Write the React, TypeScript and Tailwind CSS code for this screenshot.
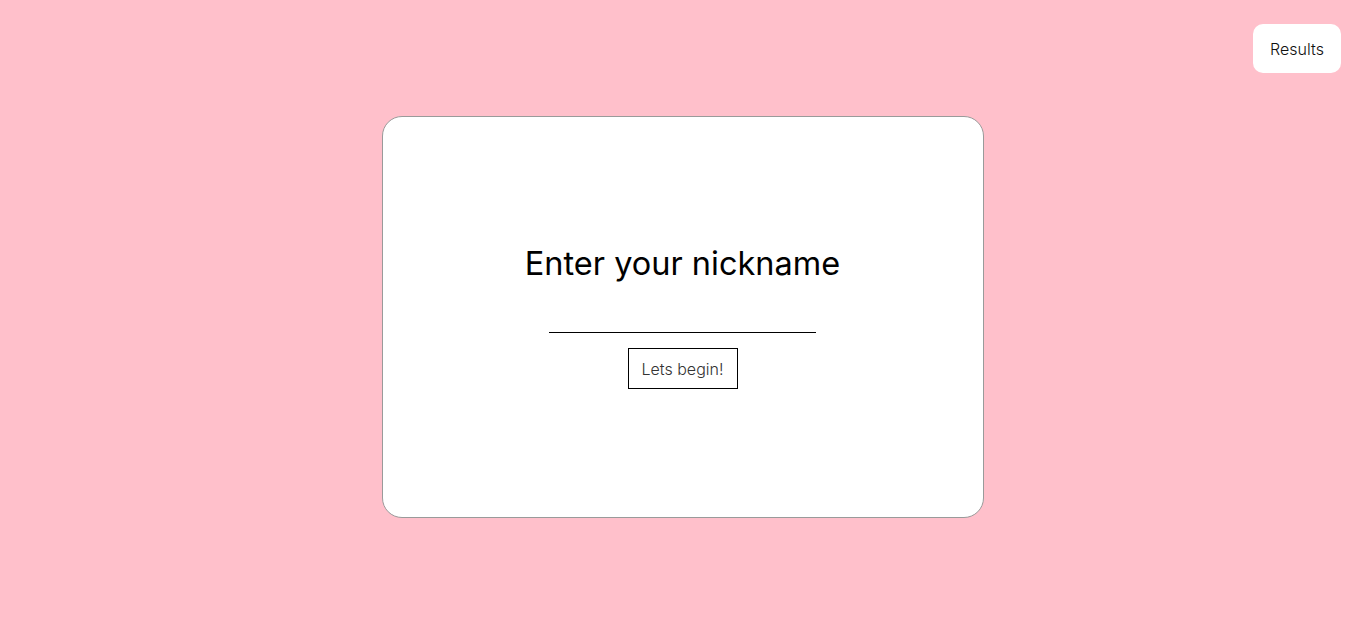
import { useState } from 'react';

export default function App() {
  const [nickname, setNickname] = useState('');

  return (
    <div className="relative flex h-[635px] w-full items-center justify-center bg-[#ffc0cb] pb-px font-['Inter',sans-serif]">
      <button className="absolute top-6 right-6 flex h-[49px] w-[88px] items-center justify-center rounded-[10px] bg-white text-[16px] font-light text-[#111]">
        Results
      </button>

      <div className="flex h-[402px] w-[602px] flex-col items-center justify-center rounded-[20px] border border-[#9a9a9a] bg-white">
        <h1 className="h-[38px] text-[32.5px] leading-[38px] font-normal text-black">Enter your nickname</h1>
        <input
          value={nickname}
          onChange={(e) => setNickname(e.target.value)}
          className="mt-[19px] h-[31px] w-[267px] border-b border-black bg-transparent text-center text-[16px] outline-none"
        />
        <button className="mt-[15px] flex h-[41px] w-[110px] items-center justify-center border border-black text-[16px] font-light text-[#333]">
          Lets begin!
        </button>
      </div>
    </div>
  );
}
